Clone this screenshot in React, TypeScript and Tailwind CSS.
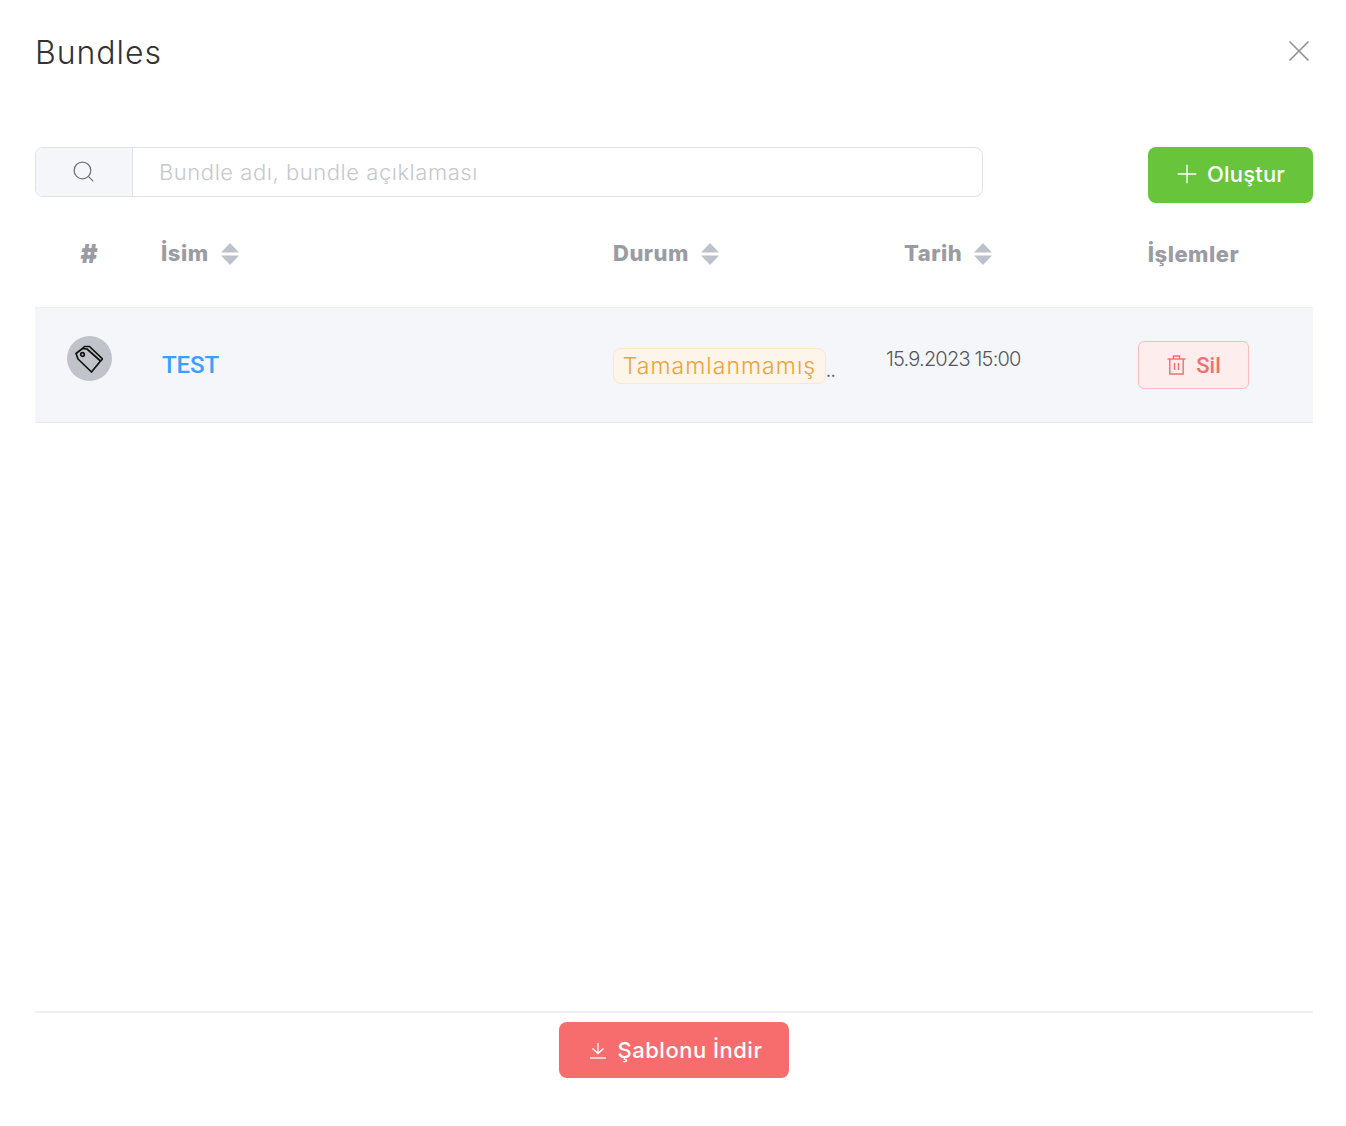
import React from "react";
import { Search, X, Plus } from "lucide-react";

const font = "font-['Inter','Liberation_Sans',sans-serif]";

const SortIcon = () => (
  <svg width="18" height="22" viewBox="0 0 18 22" className="block">
    <path d="M9 0L18 9.5H0Z" fill="#bdc2ca" />
    <path d="M0 12.5H18L9 22Z" fill="#bdc2ca" />
  </svg>
);

const TagIcon = () => (
  <svg width="28" height="28" viewBox="0 0 28 28" fill="none" stroke="#111" strokeWidth="1.7" strokeLinejoin="round">
    <path d="M1 8.5L7.5 3.5L12 4L25.5 16L16.5 27L3 14Z" />
    <path d="M7.5 3.5L9.5 1.5H14.5L27.5 14L25.5 16" />
    <circle cx="7.5" cy="9.5" r="1.8" />
  </svg>
);

const TrashIcon = () => (
  <svg width="19" height="20" viewBox="0 0 19 20" fill="none" stroke="#f66d6d" strokeWidth="1.4">
    <path d="M0.5 4H18.5" />
    <path d="M6.5 4V1H12.5V4" />
    <path d="M2.8 4V19H16.2V4" />
    <path d="M7.5 8V15M11.5 8V15" />
  </svg>
);

const DownloadIcon = () => (
  <svg width="18" height="17" viewBox="0 0 18 17" fill="none" stroke="#fff" strokeWidth="1.3">
    <path d="M9 1V11" />
    <path d="M3.5 6.5L9 11.5L14.5 6.5" />
    <path d="M1 16H17" />
  </svg>
);

const headClass = "text-[22px] font-extrabold text-[#9a9ba3] tracking-[0.5px]";

const HeadCell = ({ label }: { label: string }) => (
  <div className="flex items-center gap-3 pl-[18px]">
    <span className={headClass}>{label}</span>
    <SortIcon />
  </div>
);

export default function App() {
  return (
    <div className={`${font} h-[1126px] w-full bg-white pl-[35px] pr-[33px] flex flex-col`}>
      <div className="flex items-start justify-between pt-[33px] h-[147px]">
        <h1 className="text-[32px] font-light text-[#333] leading-[40px] tracking-[0.95px]">Bundles</h1>
        <button className="text-[#8f9097] -mr-[4px]">
          <X size={36} strokeWidth={1.1} />
        </button>
      </div>

      <div className="flex items-start justify-between">
        <div className="flex h-[50px] w-[948px] rounded-lg border border-[#e0e2ea] overflow-hidden">
          <div className="w-[97px] bg-[#f5f6fa] border-r border-[#e0e2ea] flex items-center justify-center pr-[2px] pb-[2px]">
            <Search size={25} strokeWidth={1.2} className="text-[#71727a]" />
          </div>
          <div className="flex-1 pl-[26px] flex items-center text-[22px] font-light text-[#c6c8d0] tracking-[0.55px]">
            Bundle adı, bundle açıklaması
          </div>
        </div>
        <button className="w-[165px] h-[56px] rounded-lg bg-[#68c43a] text-white text-[22px] font-medium flex items-center justify-center gap-[5px] tracking-[0.2px] pb-[2px] pr-[4px]">
          <Plus size={30} strokeWidth={1.1} />
          Oluştur
        </button>
      </div>

      <div className="flex-1">
        <div className="grid grid-cols-[108px_452px_291px_188px_239px] h-[105px] items-center pb-[3px] border-b border-[#eff0f4]">
          <div className="text-[26px] font-black text-[#9a9ba3] text-center">#</div>
          <HeadCell label="İsim" />
          <HeadCell label="Durum" />
          <HeadCell label="Tarih" />
          <div className={`${headClass} text-center pt-[2px]`}>İşlemler</div>
        </div>
        <div className="grid grid-cols-[108px_452px_291px_188px_239px] h-[115px] items-center bg-[#f5f6fa] border-b border-[#e8e9ef]">
          <div className="flex justify-center pb-[13px]">
            <div className="w-[45px] h-[45px] rounded-full bg-[#c0c3c9] flex items-center justify-center">
              <TagIcon />
            </div>
          </div>
          <div className="pl-[19px] text-[24px] font-medium text-[#3c9eff] font-['Roboto',sans-serif] tracking-[-0.1px]">TEST</div>
          <div className="pl-[18px] flex items-end pt-[2px]">
            <span className="h-[36px] w-[213px] rounded-lg bg-[#fdf5e9] border border-[#fbe9cf] text-[#efa334] text-[23px] font-light flex items-center justify-center tracking-[1.05px] shrink-0">
              Tamamlanmamış
            </span>
            <span className="text-[#666] text-[16px] font-medium leading-[20px] pb-[3px]">..</span>
          </div>
          <div className="text-[20px] font-light text-[#55565d] pb-[12px] tracking-[-0.8px]">15.9.2023 15:00</div>
          <div className="flex justify-center">
            <button className="w-[111px] h-[48px] rounded-md bg-[#feeded] border border-[#fcbcbc] text-[#f66d6d] text-[22px] font-medium font-['Roboto',sans-serif] flex items-center justify-center gap-[10px] pl-px">
              <TrashIcon />
              Sil
            </button>
          </div>
        </div>
      </div>

      <div className="border-t-2 border-[#eeeff4] h-[115px] pt-[9px] flex justify-center">
        <button className="w-[230px] h-[56px] rounded-lg bg-[#f76c6c] text-white text-[22px] font-medium flex items-center justify-center gap-[11px] tracking-[0.5px] pl-[3px]">
          <DownloadIcon />
          Şablonu İndir
        </button>
      </div>
    </div>
  );
}
